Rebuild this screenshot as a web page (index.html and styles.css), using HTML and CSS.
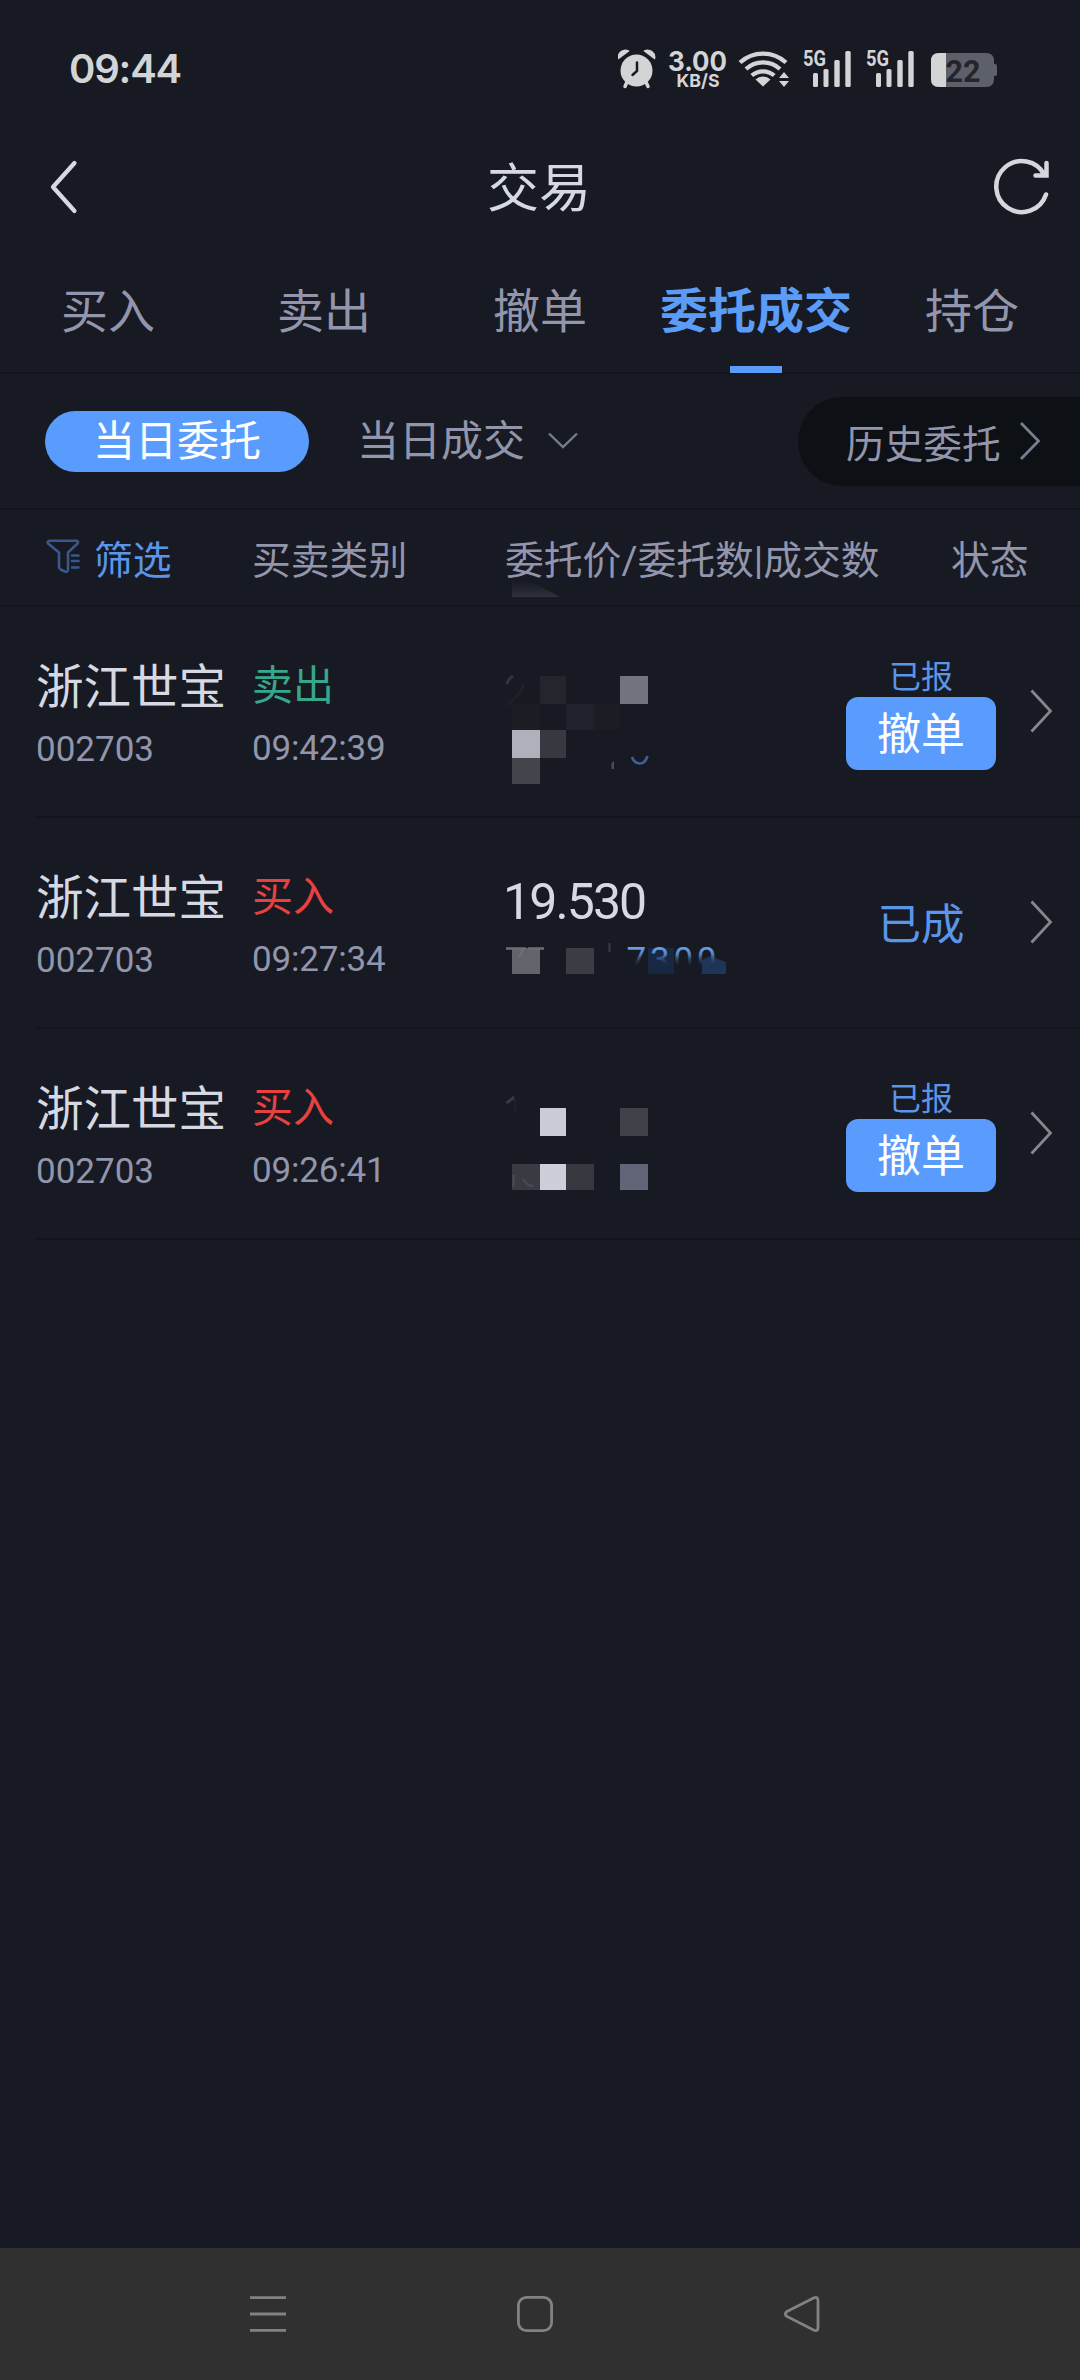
FILE: index.html
```html
<!DOCTYPE html>
<html lang="zh-CN">
<head>
<meta charset="utf-8">
<title>交易</title>
<link rel="stylesheet" href="styles.css">
</head>
<body>
<div class="screen">
  <div class="status">
    <span class="clock">09:44</span>
    <svg class="status-icons" width="380" height="60" viewBox="618 39 380 60">
      <g fill="#d3d4d6">
        <circle cx="636.5" cy="70.500" r="16"/>
        <path d="M618.500 58.500a7 7 0 0 1 10-7.500zM654.500 58.500a7 7 0 0 0-10-7.500z" stroke="#d3d4d6" stroke-width="1.500" stroke-linejoin="round"/>
        <path d="M627 82l-2 4.500M646 82l2 4.500" stroke="#d3d4d6" stroke-width="3.500" stroke-linecap="round"/>
        <path d="M637 62.500v8.500l-4.500 4" fill="none" stroke="#171a22" stroke-width="2.500" stroke-linecap="round"/>
        <text class="net-speed" x="668" y="70.500" textLength="59" lengthAdjust="spacingAndGlyphs">3.00</text>
        <text class="net-unit" x="676.500" y="87" textLength="43" lengthAdjust="spacingAndGlyphs">KB/S</text>
        <path d="M755.500 79.500a11 11 0 0 1 15 0l-7.500 7z"/>
        <g fill="none" stroke="#d3d4d6" stroke-width="4.300">
          <path d="M740 62.500a34 34 0 0 1 46 0M746 69a25 25 0 0 1 34 0M751.800 75.500a17 17 0 0 1 22.400 0"/>
        </g>
        <path d="M779 78l5-6 5 6zM779 81l5 6 5-6z"/>
        <g id="signal">
          <text class="net-gen" x="803" y="66" textLength="23" lengthAdjust="spacingAndGlyphs">5G</text>
          <rect x="813" y="73" width="5" height="14" rx="1.500"/>
          <rect x="823.500" y="69" width="5" height="18" rx="1.500"/>
          <rect x="834.300" y="60" width="5.400" height="27" rx="1.500"/>
          <rect x="845.300" y="51" width="5.400" height="36" rx="1.500"/>
        </g>
        <use href="#signal" x="63"/>
      </g>
      <path d="M939 53h47q8 0 8 8v3h1q2 0 2 2v8q0 2-2 2h-1v3q0 8-8 8h-47q-8 0-8-8v-18q0-8 8-8z" fill="#5d6068"/>
      <path d="M939 53h7v34h-7q-8 0-8-8v-18q0-8 8-8z" fill="#d3d4d6"/>
      <text class="battery-level" x="945.500" y="81.500" textLength="35" lengthAdjust="spacingAndGlyphs">22</text>
    </svg>
  </div>

  <header class="titlebar">
    <svg width="30" height="54" viewBox="0 0 30 54"><path d="M25.500 3L4 27l21.500 24" fill="none" stroke="#d6d9e3" stroke-width="4.200" stroke-linecap="round" stroke-linejoin="round"/></svg>
    <h1>交易</h1>
    <svg width="58" height="60" viewBox="0 0 58 60" fill="none" stroke="#d6d6df" stroke-width="4.500" stroke-linecap="round"><path d="M53 37.500A25.500 25.500 0 1 1 51.500 18M53.500 6v12.500H42.500" stroke-linejoin="miter"/></svg>
  </header>

  <nav class="tabs">
    <span>买入</span><span>卖出</span><span>撤单</span><span class="active">委托成交</span><span>持仓</span>
  </nav>

  <div class="filters">
    <span class="pill">当日委托</span>
    <span class="dropdown"><span class="dropdown-label">当日成交</span>
      <svg width="32" height="20" viewBox="0 0 32 20"><path d="M2 2.500l14 13.500 14-13.500" fill="none" stroke="#787b8e" stroke-width="2.400"/></svg>
    </span>
    <span class="history">历史委托
      <svg width="22" height="40" viewBox="0 0 22 40"><path d="M2 2l17.500 18L2 38" fill="none" stroke="#787e90" stroke-width="2.800"/></svg>
    </span>
  </div>

  <div class="columns">
    <span class="sift">
      <svg width="35" height="35" viewBox="0 0 35 35" fill="none" stroke="#3b588e" stroke-width="2.600" stroke-linecap="round" stroke-linejoin="round"><path d="M3.500 1.800h27q2.500.5.800 3L22 13.500v17q0 3-3 2l-4-1.800q-2-1-2-3V13.500L2.300 4.800q-1.700-2.500 1.200-3z"/><path d="M26 16.500h6.500M26 22h6.500M26 28.500h6.500"/></svg>
      筛选
    </span>
    <span class="col-kind">买卖类别</span>
    <span class="col-price">委托价/委托数|成交数</span>
    <span class="col-state">状态</span>
    <svg class="smudge" width="60" height="18" viewBox="0 0 60 18">
      <defs><linearGradient id="smudge-fill" x1="0" y1="0" x2="0" y2="1"><stop offset="0" stop-color="#2b2d37" stop-opacity="0"/><stop offset="1" stop-color="#2e303a"/></linearGradient></defs>
      <path d="M0 0l28 5v12H0zM28 6l20 11H28z" fill="url(#smudge-fill)"/>
    </svg>
  </div>

  <main class="orders">
    <article class="order">
      <div class="stock"><b>浙江世宝</b><i>002703</i></div>
      <div class="kind sell"><b>卖出</b><i>09:42:39</i></div>
      <div class="price">
        <svg class="mosaic" width="190" height="210" viewBox="506 607 190 210">
          <path d="M507 684q1-5 6-8" fill="none" stroke="#34363e" stroke-width="3"/>
          <path d="M524 684q-2 8-16 21" fill="none" stroke="#20222a" stroke-width="2.500"/>
          <path fill="#24262e" d="M540 676h26v28h-26z"/><path fill="#72747d" d="M620 676h28v28h-28z"/>
          <path fill="#1b1d25" d="M512 704h28v26h-28zM594 704h26v26h-26z"/><path fill="#20222b" d="M566 704h28v26h-28z"/>
          <path fill="#aeb1bb" d="M512 730h28v28h-28z"/><path fill="#373940" d="M540 730h26v28h-26z"/><path fill="#43454c" d="M512 758h28v26h-28z"/>
          <path fill="#4a4c55" d="M611.500 763l2.500-2v8h-2.500z"/>
          <path d="M632 757q2 6 7.500 6.500T647.500 756" fill="none" stroke="#3d5f93" stroke-width="2.600"/>
        </svg>
      </div>
      <div class="state"><small>已报</small><button class="cancel">撤单</button></div>
      <svg class="arrow" width="24" height="44" viewBox="0 0 24 44"><path d="M1.500 1.500L20.500 22l-19 20.500"/></svg>
    </article>

    <article class="order">
      <div class="stock"><b>浙江世宝</b><i>002703</i></div>
      <div class="kind buy"><b>买入</b><i>09:27:34</i></div>
      <div class="price">
        <span class="amount">19.530</span>
        <svg class="mosaic" width="220" height="210" viewBox="506 818 220 210">
          <defs><linearGradient id="fade" gradientUnits="userSpaceOnUse" x1="0" y1="946" x2="0" y2="970"><stop offset="0" stop-color="#6ba5f5"/><stop offset=".35" stop-color="#5382c6"/><stop offset=".9" stop-color="#171a22" stop-opacity="0"/></linearGradient></defs>
          <path fill="#62646c" d="M512 948h28v26h-28z"/><path fill="#3b3d45" d="M566 948h28v26h-28z"/>
          <path d="M506 948.500h18l-5 8M528 948.500h16" fill="none" stroke="#6d6f78" stroke-width="2.500"/>
          <path d="M609.500 943v9" stroke="#3a3c44" stroke-width="2"/>
          <path fill="#182744" d="M648 948h26v26h-26z"/><path fill="#1e3459" d="M702 974v-14l8-4 18 7v11z"/>
          <text class="qty-part" x="626.500" y="972" textLength="90">7300</text>
        </svg>
      </div>
      <div class="state"><span class="done">已成</span></div>
      <svg class="arrow" width="24" height="44" viewBox="0 0 24 44"><path d="M1.500 1.500L20.500 22l-19 20.500"/></svg>
    </article>

    <article class="order">
      <div class="stock"><b>浙江世宝</b><i>002703</i></div>
      <div class="kind buy"><b>买入</b><i>09:26:41</i></div>
      <div class="price">
        <svg class="mosaic" width="190" height="210" viewBox="506 1029 190 210">
          <path d="M506.500 1103l8-6" fill="none" stroke="#383a42" stroke-width="3"/><path d="M515 1097v16" stroke="#1e2028" stroke-width="2"/>
          <path fill="#c9ccd6" d="M540 1108h26v28h-26z"/><path fill="#40424a" d="M620 1108h28v28h-28z"/>
          <path fill="#393b43" d="M512 1164h28v26h-28z"/><path fill="#cccfd9" d="M540 1164h26v26h-26z"/>
          <path fill="#363840" d="M566 1164h28v26h-28z"/><path fill="#626477" d="M620 1164h28v26h-28z"/>
          <path d="M513.500 1175v12M523 1179q3 6 10 7" fill="none" stroke="#4a4c54" stroke-width="2"/>
        </svg>
      </div>
      <div class="state"><small>已报</small><button class="cancel">撤单</button></div>
      <svg class="arrow" width="24" height="44" viewBox="0 0 24 44"><path d="M1.500 1.500L20.500 22l-19 20.500"/></svg>
    </article>
  </main>

  <footer class="navbar">
    <svg width="36" height="36" viewBox="0 0 36 36"><path d="M0 1.700h36M0 18h36M0 34.300h36"/></svg>
    <svg width="36" height="36" viewBox="0 0 36 36"><rect x="1.400" y="1.400" width="33.200" height="33.200" rx="8"/></svg>
    <svg width="36" height="36" viewBox="0 0 36 36"><path d="M2.500 15.800L30 1.800q4-1.400 4 2.400v27.600q0 3.800-4 2.400L2.500 20.200q-2.200-2.200 0-4.400z"/></svg>
  </footer>
</div>
</body>
</html>
```
FILE: styles.css
```css
* { box-sizing: border-box; }

body {
  margin: 0;
  background: #171a22;
  font-family: Roboto, "Noto Sans CJK SC", sans-serif;
  color: #9295ac;
}

svg { display: block; flex: none; }
i { font-style: normal; }
b, h1 { font-weight: 400; }

.screen {
  width: 1080px;
  height: 2380px;
  display: flex;
  flex-direction: column;
}

/* system status */
.status {
  height: 136px;
  padding: 2px 82px 0 69px;
  display: flex;
  align-items: center;
  justify-content: space-between;
}
.clock {
  font: 600 40px/40px Inter, sans-serif;
  letter-spacing: -1.2px;
  color: #d3d4d6;
}
.net-speed { font: 700 27px Inter, sans-serif; }
.net-unit { font: 700 18px Inter, sans-serif; }
.net-gen { font: 700 22px Roboto, sans-serif; }
.battery-level { font: 700 32px Roboto, sans-serif; fill: #22252d; }

/* title */
.titlebar {
  height: 104px;
  padding: 0 29px 2px 49px;
  display: flex;
  align-items: center;
  justify-content: space-between;
}
.titlebar h1 {
  margin: 0 0 0 6px;
  padding-top: 6px;
  font-size: 52px;
  line-height: 60px;
  color: #d6d9e3;
}

/* tabs */
.tabs {
  height: 134px;
  display: grid;
  grid-template-columns: repeat(5, 1fr);
  border-bottom: 2px solid #11141b;
  font-size: 47px;
  line-height: 144px;
  text-align: center;
}
.tabs span { height: 133px; }
.tabs .active {
  display: flex;
  flex-direction: column;
  align-items: center;
  padding-top: 9px;
  font-weight: 700;
  font-size: 48px;
  line-height: 126px;
  color: #5b9cf8;
}
.tabs .active::after {
  content: "";
  width: 52px;
  height: 7px;
  margin-top: -9px;
  background: #5b9cf8;
  flex: none;
}

/* filters */
.filters {
  height: 136px;
  padding-left: 45px;
  display: flex;
  align-items: center;
  border-bottom: 2px solid #11141b;
  font-size: 42px;
}
.pill {
  width: 264px;
  height: 61px;
  border-radius: 31px;
  background: #5a9cfd;
  color: #fff;
  line-height: 61px;
  text-align: center;
}
.dropdown {
  margin-left: 48px;
  display: flex;
  align-items: center;
  gap: 22px;
}
.dropdown-label { line-height: 61px; }
.history {
  margin-left: auto;
  width: 282px;
  height: 89px;
  padding-left: 48px;
  display: flex;
  align-items: center;
  gap: 18px;
  border-radius: 45px 0 0 45px;
  background: #0d1014;
  font-size: 38.700px;
}

/* column headings */
.columns {
  position: relative;
  height: 97px;
  padding: 0 44px 2px 46px;
  display: grid;
  grid-template-columns: 206px 253px 446px 1fr;
  align-items: center;
  border-bottom: 2px solid #12151c;
  font-size: 38.800px;
  white-space: nowrap;
}
.sift { display: flex; align-items: center; gap: 13px; color: #5b95ea; }
.smudge { position: absolute; left: 512px; top: 70px; }

/* orders */
.order {
  height: 211px;
  margin-left: 36px;
  display: grid;
  grid-template-columns: 216px 254px 340px 150px 1fr;
  border-bottom: 2px solid #12151c;
}
.stock, .kind { display: flex; flex-direction: column; padding-top: 51px; }
.stock b { font-size: 47.500px; line-height: 60px; color: #d6d9e3; }
.kind b { font-size: 41px; line-height: 56px; }
.stock i, .kind i { font-size: 35px; line-height: 40px; }
.stock i { margin-top: 12px; }
.kind i { margin-top: 15px; letter-spacing: -0.2px; }
.sell b { color: #38a68b; }
.buy b { color: #e8413f; }
.price { position: relative; }
.mosaic { position: absolute; left: 0; top: 0; }
.amount {
  display: block;
  padding-top: 54px;
  margin-left: -3px;
  font-size: 50px;
  line-height: 60px;
  letter-spacing: -1.900px;
  color: #d6d9e3;
}
.qty-part { font-size: 35px; fill: url(#fade); }
.state {
  display: flex;
  flex-direction: column;
  align-items: center;
  color: #5b95ea;
}
.state small { margin-top: 50px; font-size: 32px; line-height: 40px; }
.cancel {
  width: 150px;
  height: 73px;
  padding: 4px 0 0;
  border: 0;
  border-radius: 12px;
  background: #5a9cfd;
  color: #fff;
  font-family: inherit;
  font-size: 44px;
  line-height: 69px;
}
.done { margin-top: 73px; font-size: 43.500px; line-height: 70px; }
.arrow { margin: 82px 0 0 34px; fill: none; stroke: #85878f; stroke-width: 2.800; }

/* system navigation */
.navbar {
  margin-top: auto;
  height: 132px;
  padding: 48px 260px 0 250px;
  display: flex;
  justify-content: space-between;
  background: #303030;
}
.navbar svg { fill: none; stroke: #828282; stroke-width: 2.800; }
```
